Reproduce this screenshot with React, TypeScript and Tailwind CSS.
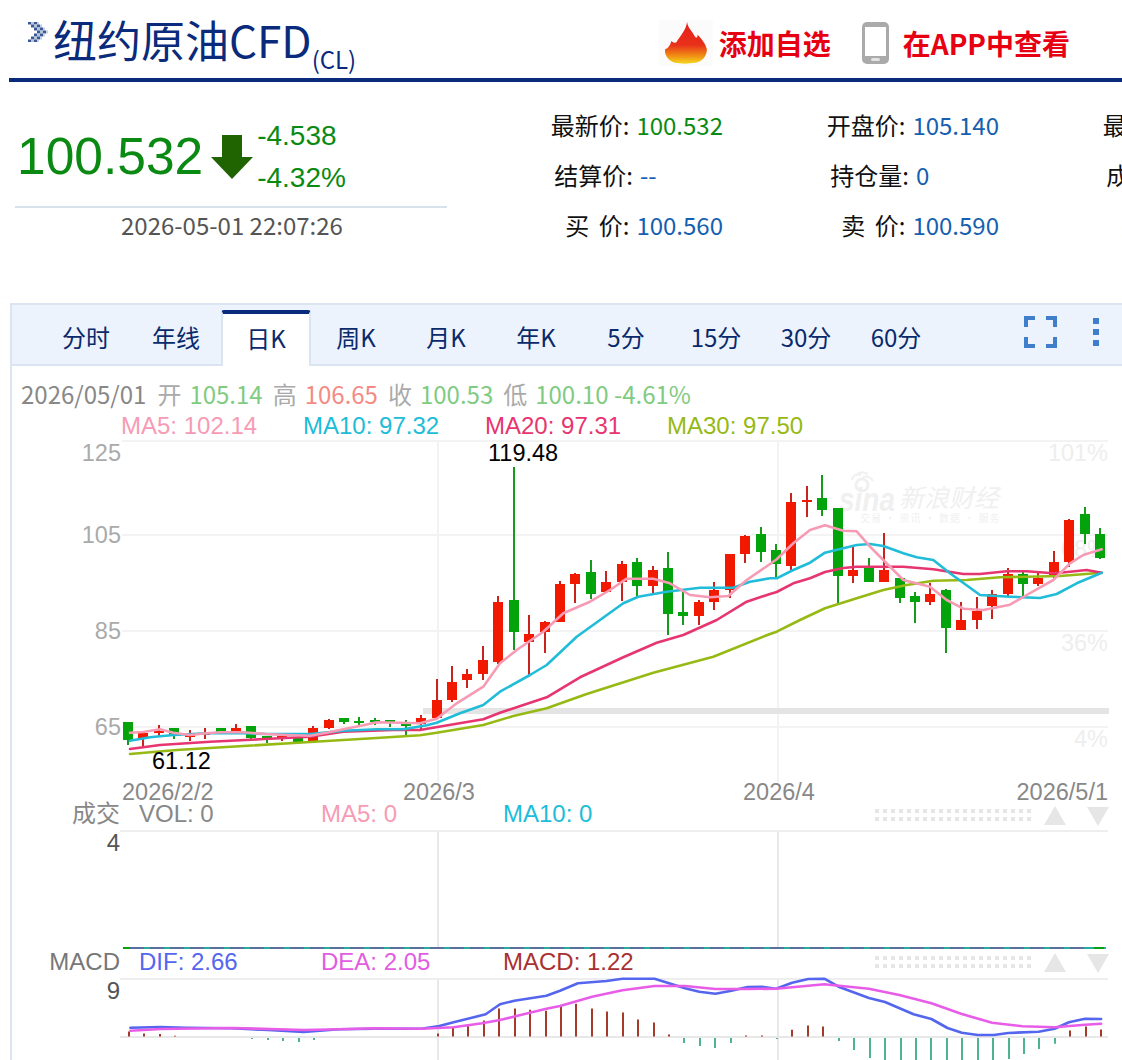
import { Fragment } from "react";

type Candle = [number, number, number, number, "r" | "g"];
type Pt = [number, number];

// wick top, wick bottom, body top, body bottom
const candles: Candle[] = [
  [722, 745, 722, 740, "g"], [733, 746, 733, 738, "r"], [725, 737, 731, 733, "r"], [728, 739, 728, 736, "g"],
  [730, 741, 735, 736, "r"], [728, 739, 733, 735, "r"], [728, 734, 728, 734, "g"], [724, 733, 728, 732, "r"],
  [726, 739, 726, 738, "g"], [736, 743, 736, 738, "g"], [735, 741, 736, 739, "r"], [733, 742, 737, 742, "g"],
  [726, 741, 728, 741, "r"], [719, 729, 720, 728, "r"], [718, 724, 718, 722, "g"], [717, 726, 721, 722, "g"],
  [718, 725, 720, 722, "g"], [720, 727, 720, 722, "g"], [720, 735, 724, 726, "g"], [715, 729, 718, 724, "r"],
  [679, 718, 700, 718, "r"], [666, 702, 682, 700, "r"], [669, 688, 674, 680, "r"], [646, 680, 660, 674, "r"],
  [596, 664, 602, 662, "r"], [467, 650, 600, 632, "g"], [615, 675, 634, 642, "r"], [621, 653, 622, 632, "r"],
  [581, 622, 584, 622, "r"], [573, 603, 574, 584, "r"], [560, 599, 572, 594, "g"], [571, 592, 582, 592, "r"],
  [561, 601, 564, 582, "r"], [558, 597, 562, 586, "g"], [566, 594, 570, 586, "r"], [552, 635, 568, 614, "g"],
  [592, 625, 612, 616, "g"], [600, 625, 602, 616, "r"], [582, 610, 590, 602, "r"], [554, 598, 554, 590, "r"],
  [535, 563, 536, 554, "r"], [527, 562, 534, 552, "g"], [544, 577, 550, 564, "g"], [493, 570, 502, 566, "r"],
  [486, 517, 500, 502, "r"], [475, 516, 498, 510, "g"], [508, 603, 508, 576, "g"], [547, 583, 570, 576, "r"],
  [558, 582, 568, 582, "g"], [533, 582, 570, 582, "r"], [578, 603, 578, 598, "g"], [592, 623, 596, 602, "g"],
  [583, 605, 594, 602, "r"], [589, 653, 590, 628, "g"], [602, 630, 620, 630, "r"], [597, 629, 611, 620, "r"],
  [590, 619, 594, 606, "r"], [568, 596, 574, 594, "r"], [572, 596, 574, 584, "g"], [572, 586, 578, 584, "r"],
  [551, 578, 562, 576, "r"], [519, 567, 520, 562, "r"], [507, 544, 514, 534, "g"], [528, 559, 534, 558, "g"],
];

// traced from the reference in crop coordinates
const crop = (ox: number, oy: number, pts: number[][], sx = 3, sy = 3): Pt[] =>
  pts.map(([x, y]) => [ox + x / sx, oy + y / sy]);

const ma5: Pt[] = [
  ...crop(110, 450, [[60, 848], [100, 846], [150, 838], [190, 848], [240, 855], [290, 850], [330, 847], [400, 847], [470, 852], [530, 855], [600, 857], [650, 848], [700, 838], [760, 826], [800, 817], [870, 818], [930, 820], [980, 806]]),
  ...crop(400, 440, [[110, 836], [170, 790], [250, 740], [300, 670], [350, 630], [430, 575], [490, 520], [570, 485], [630, 450], [680, 416], [760, 416], [810, 430], [870, 465], [930, 472], [985, 468], [1040, 420], [1110, 372]]),
  ...crop(760, 440, [[50, 358], [100, 310], [150, 270], [195, 256], [250, 272], [290, 274], [330, 320], [370, 360], [430, 420], [510, 440], [560, 480], [610, 506], [670, 510], [750, 494], [800, 465], [880, 420], [930, 370], [970, 345], [1025, 328]]),
];
const ma10: Pt[] = [
  ...crop(110, 450, [[60, 872], [120, 862], [190, 855], [290, 850], [400, 850], [470, 852], [600, 852], [700, 842], [800, 838], [880, 838], [950, 826]]),
  ...crop(400, 440, [[110, 848], [180, 820], [250, 795], [300, 755], [390, 705], [440, 675], [530, 590], [600, 540], [670, 490], [715, 470], [800, 455], [900, 443], [1000, 443], [1050, 425], [1110, 415]]),
  ...crop(760, 440, [[50, 415], [100, 390], [150, 368], [195, 338], [250, 325], [290, 315], [330, 312], [370, 318], [430, 340], [470, 352], [520, 360], [570, 400], [660, 465], [750, 470], [840, 474], [890, 462], [950, 430], [1025, 398]]),
];
const ma20: Pt[] = [
  ...crop(110, 450, [[60, 897], [150, 885], [300, 875], [450, 868], [600, 860], [700, 845], [850, 840], [930, 840]]),
  ...crop(400, 440, [[130, 858], [250, 838], [300, 818], [440, 772], [540, 712], [670, 652], [770, 608], [850, 585], [950, 540], [1040, 485], [1110, 462]]),
  ...crop(760, 440, [[50, 456], [100, 430], [150, 415], [195, 396], [250, 384], [290, 380], [370, 380], [430, 380], [520, 388], [610, 402], [660, 402], [740, 394], [800, 394], [880, 400], [930, 395], [980, 390], [1025, 398]]),
];
const ma30: Pt[] = [
  ...crop(110, 450, [[60, 912], [200, 900], [400, 888], [600, 876], [800, 864], [930, 856]]),
  ...crop(400, 440, [[110, 878], [250, 855], [340, 828], [440, 805], [560, 762], [760, 698], [940, 650], [1110, 582]]),
  ...crop(760, 440, [[50, 575], [120, 540], [195, 505], [290, 475], [370, 450], [440, 435], [520, 422], [620, 420], [720, 412], [800, 410], [900, 408], [1025, 398]]),
];
const dif: Pt[] = [
  ...crop(0, 780, [[365, 743], [450, 741], [520, 743], [650, 745], [750, 750], [850, 756], [950, 748], [1050, 746], [1180, 746], [1230, 738], [1270, 727], [1360, 703], [1400, 673], [1440, 662], [1530, 647]], 2.8),
  ...crop(560, 780, [[0, 632], [50, 610], [130, 603], [175, 596], [265, 596], [350, 625], [390, 635], [435, 641], [480, 632], [525, 621], [565, 620], [605, 626], [650, 608], [695, 597], [740, 596], [780, 620], [865, 654], [910, 666], [990, 703], [1040, 717], [1085, 744], [1125, 758], [1170, 765], [1215, 765], [1255, 759], [1340, 755], [1385, 746], [1425, 727], [1470, 716], [1515, 717]], 2.8),
];
const dea: Pt[] = [
  ...crop(0, 780, [[365, 752], [450, 747], [650, 744], [850, 750], [950, 748], [1050, 745], [1180, 746], [1270, 742], [1350, 730], [1400, 720], [1530, 686]], 2.8),
  ...crop(560, 780, [[0, 678], [90, 650], [175, 631], [265, 618], [350, 618], [435, 627], [520, 627], [605, 626], [695, 617], [740, 613], [865, 626], [950, 645], [1040, 670], [1125, 702], [1210, 728], [1295, 739], [1385, 742], [1470, 734], [1515, 731]], 2.8),
];

// positive is a red bar above the zero line, negative a green one below
const hist = [
  5, 3, 2.5, 0.7, 0, 0, 0, 0, -1, -2, -3, -4, -2, 0, 0, 0, 0, 0, 0, 0,
  3, 9, 12, 16, 28, 28, 26.7, 25.7, 30, 32.7, 28, 25, 24, 17, 14, 2,
  -5, -8, -10, -5, 1, 1, -1, 6.7, 11, 10, -3, -12, -20, -23, -23, -23, -23, -23, -23, -23, -23, -21, -16, -11, -5.7, 6, 10, 7,
];

const candleX = (i: number) => Math.round(128 + 15.43 * i);
const toPoints = (pts: Pt[]) => pts.map(([x, y]) => `${x.toFixed(1)},${y.toFixed(1)}`).join(" ");

const tabs = ["分时", "年线", "日K", "周K", "月K", "年K", "5分", "15分", "30分", "60分"];

const stats: { label: string; value: string; tone?: string }[] = [
  { label: "最新价:", value: "100.532", tone: "text-[#0a8a12]" },
  { label: "开盘价:", value: "105.140" },
  { label: "最高价:", value: "106.650" },
  { label: "结算价:", value: "--" },
  { label: "持仓量:", value: "0" },
  { label: "成交量:", value: "0" },
  { label: "买 价:", value: "100.560" },
  { label: "卖 价:", value: "100.590" },
  { label: "买 量:", value: "1" },
];

function Line({ pts, color, width = 2.6 }: { pts: Pt[]; color: string; width?: number }) {
  return <polyline points={toPoints(pts)} fill="none" stroke={color} strokeWidth={width} strokeLinejoin="round" strokeLinecap="round" />;
}

function DotsAndArrows({ y }: { y: number }) {
  return (
    <g fill="#e6e6e6">
      {[y + 3, y + 11].map((row) =>
        Array.from({ length: 20 }, (_, i) => <rect key={`${row}-${i}`} x={875 + i * 8} y={row} width={4} height={4} />),
      )}
      <polygon points={`1044,${y + 19} 1066,${y + 19} 1055,${y}`} />
      <polygon points={`1087,${y + 1} 1109,${y + 1} 1098,${y + 20}`} />
    </g>
  );
}

function ChartSvg() {
  return (
    <svg viewBox="12 440 1110 620" className="block h-[620px] w-[1110px] font-['Liberation_Sans',sans-serif]" fontSize={24}>
      {/* grid */}
      <g stroke="#f3f3f3" strokeWidth={2}>
        <line x1={122} x2={1108} y1={441} y2={441} />
        <line x1={122} x2={1108} y1={535} y2={535} />
        <line x1={122} x2={1108} y1={631} y2={631} />
        <line x1={122} x2={1108} y1={727} y2={727} />
        <line x1={438} x2={438} y1={441} y2={782} />
        <line x1={778} x2={778} y1={441} y2={782} />
      </g>
      <rect x={423} y={708} width={686} height={6} fill="#e4e4e4" />
      <g fontSize={23.5} textAnchor="end" fill="#aaaaaa">
        <text x={121} y={461}>125</text>
        <text x={121} y={543}>105</text>
        <text x={121} y={639}>85</text>
        <text x={121} y={735}>65</text>
      </g>
      <g fontSize={23.5} textAnchor="end" fill="#eeeeee">
        <text x={1108} y={461}>101%</text>
        <text x={1108} y={557}>68%</text>
        <text x={1108} y={651}>36%</text>
        <text x={1108} y={747}>4%</text>
      </g>

      {/* sina watermark */}
      <g fill="#f0f0f0">
        <text x={839} y={511} fontSize={33} fontWeight={700} fontStyle="italic" textLength={56} lengthAdjust="spacingAndGlyphs">sina</text>
        <circle cx={862} cy={485} r={6} fill="none" stroke="#f0f0f0" strokeWidth={3} />
        <path d="M852 480 Q853 473 861 475 M856 476 Q860 470 868 474 M863 477 Q869 475 873 481" fill="none" stroke="#f0f0f0" strokeWidth={2} />
        <text x={899} y={507} fontSize={25} fontStyle="italic" className="font-['Noto_Sans_CJK_SC',sans-serif]">新浪财经</text>
        <text x={860} y={522} fontSize={10} className="font-['Noto_Sans_CJK_SC',sans-serif]" letterSpacing={1}>交易 · 资讯 · 数据 · 服务</text>
      </g>

      {/* candles */}
      {candles.map(([top, bottom, bodyTop, bodyBottom, side], i) => {
        const x = candleX(i);
        return (
          <Fragment key={i}>
            <line x1={x} x2={x} y1={top} y2={bottom} stroke={side === "r" ? "#c9231d" : "#169a1c"} strokeWidth={2} />
            <rect x={x - 5} y={bodyTop} width={10} height={Math.max(bodyBottom - bodyTop, 2)} fill={side === "r" ? "#f11a00" : "#03a30b"} />
          </Fragment>
        );
      })}
      <Line pts={ma30} color="#96b914" />
      <Line pts={ma20} color="#e6356f" />
      <Line pts={ma10} color="#20bcd8" />
      <Line pts={ma5} color="#f79bb5" />

      <text x={488} y={461} fontSize={23.5} fill="#000000">119.48</text>
      <text x={152} y={769} fontSize={23.5} fill="#000000">61.12</text>

      <g fill="#888888" fontSize={23.5}>
        <text x={122} y={800}>2026/2/2</text>
        <text x={403} y={800}>2026/3</text>
        <text x={743} y={800}>2026/4</text>
        <text x={1108} y={800} textAnchor="end">2026/5/1</text>
      </g>

      {/* volume */}
      <text x={120} y={822} textAnchor="end" fill="#888888" className="font-['Noto_Sans_CJK_SC',sans-serif]" fontSize={24}>成交</text>
      <text x={139} y={822} fill="#888888">VOL: 0</text>
      <text x={321} y={822} fill="#f79bb5">MA5: 0</text>
      <text x={503} y={822} fill="#20bcd8">MA10: 0</text>
      <DotsAndArrows y={806} />
      <line x1={120} x2={1108} y1={831} y2={831} stroke="#eeeeee" strokeWidth={2} />
      <text x={120} y={851} textAnchor="end" fill="#555555">4</text>
      <g stroke="#e8e8e8" strokeWidth={2}>
        <line x1={438} x2={438} y1={832} y2={947} />
        <line x1={778} x2={778} y1={832} y2={947} />
      </g>
      <line x1={124} x2={1106} y1={948} y2={948} stroke="#28ad9c" strokeWidth={2} />
      <line x1={130} x2={1088} y1={948} y2={948} stroke="#5a6f9e" strokeWidth={2} strokeDasharray="14 6" />
      <line x1={123} x2={130} y1={948} y2={948} stroke="#03a30b" strokeWidth={2} />
      <line x1={1094} x2={1104} y1={948} y2={948} stroke="#03a30b" strokeWidth={2} />

      {/* macd */}
      <text x={120} y={970} textAnchor="end" fill="#777777">MACD</text>
      <text x={139} y={970} fill="#5566ee">DIF: 2.66</text>
      <text x={321} y={970} fill="#e25ce2">DEA: 2.05</text>
      <text x={503} y={970} fill="#a83232">MACD: 1.22</text>
      <DotsAndArrows y={953} />
      <line x1={120} x2={1108} y1={979} y2={979} stroke="#eeeeee" strokeWidth={2} />
      <text x={120} y={999} textAnchor="end" fill="#555555">9</text>
      <g stroke="#e8e8e8" strokeWidth={2}>
        <line x1={438} x2={438} y1={980} y2={1060} />
        <line x1={778} x2={778} y1={980} y2={1060} />
      </g>
      <line x1={120} x2={1108} y1={1037} y2={1037} stroke="#e8e8e8" strokeWidth={2} />
      {hist.map((v, i) =>
        v === 0 ? null : (
          <line
            key={i}
            x1={candleX(i) + 1}
            x2={candleX(i) + 1}
            y1={v > 0 ? 1036.5 - v : 1038}
            y2={v > 0 ? 1036.5 : 1038 - v}
            stroke={v > 0 ? "#a33a2a" : "#4db392"}
            strokeWidth={2}
          />
        ),
      )}
      <Line pts={dif} color="#5566ee" />
      <Line pts={dea} color="#e85de8" />
    </svg>
  );
}

// little chevron bullet in front of the title, staggered rows of dots
function TitleBullet() {
  const rows = [0, 1, 2, 3, 4, 5, 6];
  return (
    <svg viewBox="0 0 22 20" className="ml-[18px] mt-[22px] h-[20px] w-[22px] shrink-0">
      {rows.map((r) => {
        const k = Math.min(r, 6 - r) * 3;
        const y = r * 3 - 0.5;
        return (
          <Fragment key={r}>
            <rect x={k + 1} y={y} width={3} height={3} fill="#3a5a96" />
            <rect x={k + 4} y={y} width={3} height={3} fill="#b4c2dc" />
            <rect x={k + 7} y={y} width={3} height={3} fill="#3a5a96" />
            <rect x={k + 10} y={y} width={2} height={3} fill="#c6d0e4" />
          </Fragment>
        );
      })}
    </svg>
  );
}

export default function App() {
  return (
    <div className="h-[1060px] w-[1122px] overflow-hidden bg-white font-['Noto_Sans_CJK_SC','Noto_Sans',sans-serif]">
      {/* title bar */}
      <div className="ml-[9px] flex h-[82px] border-b-[4px] border-[#0a2a7c]">
        <TitleBullet />
        <div className="ml-[4px] mt-[9px] h-[60px] whitespace-nowrap text-[44px] leading-[60px] text-[#0a2a7c]">
          纽约原油CFD
          <span className="align-[-11px] text-[24px] leading-none">(CL)</span>
        </div>
        <div className="ml-auto mr-[52px] flex h-[78px] items-center pt-[8px]">
          <div className="mr-[6px] flex h-[46px] w-[54px] items-center justify-center bg-[#fbfbfb]">
            <svg viewBox="0 0 44 44" className="h-[46px] w-[46px]">
              <defs>
                <linearGradient id="flame" x1="0" x2="0" y1="0" y2="1">
                  <stop offset="0" stopColor="#e6201c" />
                  <stop offset="0.55" stopColor="#e8301a" />
                  <stop offset="0.8" stopColor="#f08a14" />
                  <stop offset="1" stopColor="#f4d820" />
                </linearGradient>
              </defs>
              <path d="M23 2 C24 8 28 11 30 15 C32 18 33 17 33 14 C37 18 41 23 42 28 C42 35 37 40 31 41 C25 42 17 42 11 41 C5 39 1 33 2 28 C5 27 7 24 8 20 C10 22 12 22 13 21 C16 16 22 10 23 2 Z" fill="url(#flame)" />
            </svg>
          </div>
          <span className="text-[28px] font-bold text-[#e60012]">添加自选</span>
          <svg viewBox="0 0 27 42" className="ml-[31px] mr-[14px] h-[42px] w-[27px]">
            <rect x={0} y={0} width={27} height={42} rx={5} fill="#aaaaaa" />
            <rect x={3} y={5} width={21} height={29} fill="#ffffff" />
            <rect x={9} y={36} width={9} height={3} rx={1.5} fill="#e2e2e2" />
          </svg>
          <span className="text-[28px] font-bold text-[#e60012]">在APP中查看</span>
        </div>
      </div>

      {/* quote */}
      <div className="flex h-[221px] pt-[20px]">
        <div className="ml-[15px] w-[432px] shrink-0">
          <div className="flex h-[106px] items-center border-b-2 border-[#d7e2ec] pt-[5px]">
            <span className="ml-[2px] font-['Liberation_Sans',sans-serif] text-[51.5px] leading-none text-[#0a8a12]">100.532</span>
            <svg viewBox="0 0 42 44" className="ml-[8px] h-[44px] w-[42px]">
              <path d="M11 0 H31 V22 H42 L21 44 L0 22 H11 Z" fill="#1f6400" />
            </svg>
            <div className="ml-[4px] font-['Liberation_Sans',sans-serif] text-[28px] leading-[42px] text-[#0a8a12]">
              <div>-4.538</div>
              <div>-4.32%</div>
            </div>
          </div>
          <div className="mt-[1px] pl-[106px] text-[24px] leading-[32px] text-[#555555]">2026-05-01 22:07:26</div>
        </div>
        <div className="-mt-[2px] grid h-[150px] shrink-0 grid-cols-[276px_276px_276px]">
          {stats.map((s) => (
            <div key={s.label} className="flex h-[50px] items-center whitespace-pre text-[24px]">
              <span className="w-[186px] text-right text-[#111111] [word-spacing:4px]">{s.label}</span>
              <span className={`ml-[7px] ${s.tone ?? "text-[#1560b0]"}`}>{s.value}</span>
            </div>
          ))}
        </div>
      </div>

      {/* chart panel */}
      <div className="ml-[10px] border-l-2 border-t-2 border-[#dbe5f2]">
        <div className="flex h-[61px] items-stretch border-b-2 border-[#dbe5f2] bg-[#edf3fc] pl-[29px] text-[24px] text-[#0a2a6c]">
          {tabs.map((t, i) =>
            i === 2 ? (
              <div key={t} className="-mb-[2px] mt-[5px] flex w-[90px] items-center justify-center rounded-t-[3px] border-x-2 border-t-[4px] border-x-[#dbe5f2] border-t-[#0a2a7c] bg-white pb-[4px]">
                {t}
              </div>
            ) : (
              <div key={t} className="flex w-[90px] items-center justify-center pt-[4px]">
                {t}
              </div>
            ),
          )}
          <div className="ml-auto flex items-center pb-[6px]">
            <svg viewBox="0 0 33 32" className="h-[32px] w-[33px]">
              <path d="M2 11 V2 H11 M22 2 H31 V11 M31 21 V30 H22 M11 30 H2 V21" fill="none" stroke="#3f7ecb" strokeWidth={4} />
            </svg>
            <svg viewBox="0 0 8 28" className="ml-[35px] mr-[22px] h-[28px] w-[8px]">
              <rect x={1} y={0} width={6} height={6} fill="#3f7ecb" />
              <rect x={1} y={11} width={6} height={6} fill="#3f7ecb" />
              <rect x={1} y={22} width={6} height={6} fill="#3f7ecb" />
            </svg>
          </div>
        </div>

        <div className="whitespace-pre pl-[9px] pt-[10px] text-[24px] leading-[36px]">
          <span className="mr-[1px] text-[#888888]">2026/05/01</span>
          <span className="ml-[10px] mr-[8px] text-[#aaaaaa]">开</span>
          <span className="text-[#7fcb82]">105.14</span>
          <span className="ml-[10px] mr-[8px] text-[#aaaaaa]">高</span>
          <span className="text-[#f58a84]">106.65</span>
          <span className="ml-[10px] mr-[8px] text-[#aaaaaa]">收</span>
          <span className="text-[#7fcb82]">100.53</span>
          <span className="ml-[10px] mr-[8px] text-[#aaaaaa]">低</span>
          <span className="text-[#7fcb82]">100.10 -4.61%</span>
        </div>
        <div className="flex pl-[109px] font-['Liberation_Sans',sans-serif] text-[24px] leading-[28px]">
          <span className="w-[182px] text-[#f79bb5]">MA5: 102.14</span>
          <span className="w-[182px] text-[#20bcd8]">MA10: 97.32</span>
          <span className="w-[182px] text-[#e6356f]">MA20: 97.31</span>
          <span className="text-[#96b914]">MA30: 97.50</span>
        </div>
        <ChartSvg />
      </div>
    </div>
  );
}
